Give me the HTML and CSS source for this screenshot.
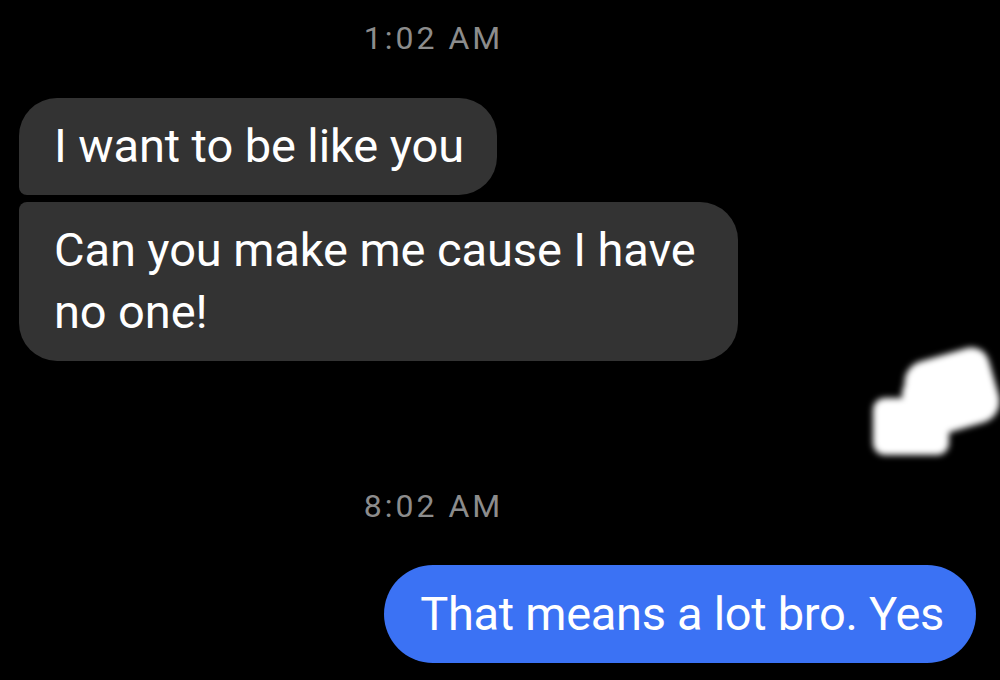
FILE: index.html
```html
<!DOCTYPE html>
<html lang="en">
<head>
<meta charset="utf-8">
<link rel="stylesheet" href="styles.css">
</head>
<body>
<main class="chat">
  <div class="time time-first">1:02 AM</div>
  <div class="row row-in">
    <div class="bubble bubble-in bubble-in-first">I want to be like you</div>
  </div>
  <div class="row row-in">
    <div class="bubble bubble-in bubble-in-last">Can you make me cause I have no one!</div>
  </div>
  <div class="time time-second">8:02 AM</div>
  <div class="row row-out">
    <div class="bubble bubble-out">That means a lot bro. Yes</div>
  </div>
  <div class="smudge" aria-hidden="true">
    <span class="smudge-a"></span>
    <span class="smudge-b"></span>
    <span class="smudge-c"></span>
  </div>
</main>
</body>
</html>
```

FILE: styles.css
```css
html, body {
  margin: 0;
  padding: 0;
  background: #000;
}

body {
  width: 1000px;
  height: 680px;
  overflow: hidden;
  font-family: Roboto, "Liberation Sans", sans-serif;
  color: #fff;
}

.chat {
  position: relative;
  display: flex;
  flex-direction: column;
  height: 680px;
  padding: 0 24px 0 19px;
  box-sizing: border-box;
}

.time {
  align-self: center;
  margin-right: 128px;
  color: #8c8c8c;
  font-size: 32px;
  line-height: 36px;
  letter-spacing: 3px;
}

.time-first {
  margin-top: 20px;
  margin-bottom: 42px;
}

.time-second {
  margin-top: 127px;
  margin-bottom: 41px;
}

.row {
  display: flex;
}

.row-out {
  justify-content: flex-end;
}

.bubble {
  font-size: 47px;
  line-height: 62px;
  letter-spacing: -0.1px;
  box-sizing: border-box;
}

.bubble-in {
  background: #333333;
  max-width: 719px;
  padding: 17px 33px 18px 35px;
}

.bubble-in-first {
  border-radius: 38px 38px 38px 8px;
  margin-bottom: 7px;
}

.bubble-in-last {
  border-radius: 8px 38px 38px 38px;
}

.bubble-out {
  background: #3b72f4;
  padding: 18px 32px 18px 36px;
  border-radius: 49px;
  letter-spacing: -0.3px;
}

.smudge {
  position: absolute;
  left: 868px;
  top: 340px;
  width: 132px;
  height: 125px;
  filter: blur(3px);
}

.smudge span {
  position: absolute;
  background: #fff;
}

.smudge-a {
  left: 40px;
  top: 14px;
  width: 88px;
  height: 76px;
  border-radius: 22px 18px 22px 30px;
  transform: rotate(-16deg);
  background: linear-gradient(180deg, #e6e6e6 0%, #fff 40%);
}

.smudge-b {
  left: 5px;
  top: 58px;
  width: 76px;
  height: 57px;
  border-radius: 12px;
}

.smudge-c {
  left: 34px;
  top: 38px;
  width: 32px;
  height: 32px;
  border-radius: 50%;
}
```
